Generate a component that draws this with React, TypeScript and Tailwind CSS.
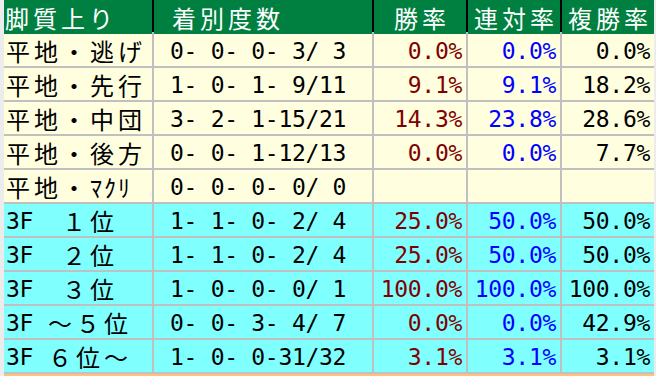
import React from "react";

const JP = "font-['Noto_Sans_CJK_JP','Noto_Sans_CJK_SC',sans-serif]";
const MONO = "font-['DejaVu_Sans_Mono','Liberation_Mono',monospace]";
const NUM = `${MONO} text-[23px] tracking-[-0.3px]`;
const COLS = "grid grid-cols-[148px_218px_92px_92px_92px]";

type Row = {
  label: React.ReactNode;
  rec: string;
  win: string;
  ren: string;
  fuku: string;
  cyan?: boolean;
};

const jpText = (s: string) => (
  <span className={`${JP} text-[24px] tracking-[4px] text-black`}>{s}</span>
);

const heiLabel = (s: string) => jpText("平地・" + s);

const threeF = (gap: "full" | "half", rest: string) => (
  <span className="flex items-center">
    <span className={`${NUM} inline-block w-[28px] text-black`}>3F</span>
    {gap === "full" ? jpText("　" + rest) : (
      <>
        <span className="inline-block w-[14px]" />
        {jpText(rest)}
      </>
    )}
  </span>
);

const rows: Row[] = [
  { label: heiLabel("逃げ"), rec: "0- 0- 0- 3/ 3", win: "0.0%", ren: "0.0%", fuku: "0.0%" },
  { label: heiLabel("先行"), rec: "1- 0- 1- 9/11", win: "9.1%", ren: "9.1%", fuku: "18.2%" },
  { label: heiLabel("中団"), rec: "3- 2- 1-15/21", win: "14.3%", ren: "23.8%", fuku: "28.6%" },
  { label: heiLabel("後方"), rec: "0- 0- 1-12/13", win: "0.0%", ren: "0.0%", fuku: "7.7%" },
  {
    label: (
      <span className="flex items-center">
        {jpText("平地・")}
        <span className={`${JP} text-[24px] tracking-[2px] text-black`}>ﾏｸﾘ</span>
      </span>
    ),
    rec: "0- 0- 0- 0/ 0",
    win: "",
    ren: "",
    fuku: "",
  },
  { label: threeF("full", "１位"), rec: "1- 1- 0- 2/ 4", win: "25.0%", ren: "50.0%", fuku: "50.0%", cyan: true },
  { label: threeF("full", "２位"), rec: "1- 1- 0- 2/ 4", win: "25.0%", ren: "50.0%", fuku: "50.0%", cyan: true },
  { label: threeF("full", "３位"), rec: "1- 0- 0- 0/ 1", win: "100.0%", ren: "100.0%", fuku: "100.0%", cyan: true },
  { label: threeF("half", "～５位"), rec: "0- 0- 3- 4/ 7", win: "0.0%", ren: "0.0%", fuku: "42.9%", cyan: true },
  { label: threeF("half", "６位～"), rec: "1- 0- 0-31/32", win: "3.1%", ren: "3.1%", fuku: "3.1%", cyan: true },
];

export default function App() {
  return (
    <div className="w-[656px] h-[376px] overflow-hidden bg-[#ececec]">
      <div className="ml-[4px] w-[650px]">
        {/* header */}
        <div className={`${COLS} gap-x-[2px] bg-black h-[32px]`}>
          <div className={`bg-[#008040] flex items-center pl-[1px] ${JP} text-[24px] tracking-[4px] text-white`}>脚質上り</div>
          <div className={`bg-[#008040] flex items-center pl-[18px] ${JP} text-[24px] tracking-[4px] text-white`}>着別度数</div>
          <div className={`bg-[#008040] flex items-center justify-center pl-[4px] ${JP} text-[24px] tracking-[4px] text-white`}>勝率</div>
          <div className={`bg-[#008040] flex items-center justify-center pl-[4px] ${JP} text-[24px] tracking-[4px] text-white`}>連対率</div>
          <div className={`bg-[#008040] flex items-center justify-center pl-[4px] ${JP} text-[24px] tracking-[4px] text-white`}>複勝率</div>
        </div>
        {/* body */}
        <div className={`${COLS} gap-[2px] bg-[#c0c0c0] py-[2px]`}>
          {rows.map((r, i) => {
            const bg = r.cyan ? "bg-[#80ffff]" : "bg-[#ffffe0]";
            return (
              <React.Fragment key={i}>
                <div className={`${bg} h-[32px] flex items-center pl-[2px] pt-[2px]`}>{r.label}</div>
                <div className={`${bg} h-[32px] flex items-center pl-[16px] pt-[2px] ${NUM} text-black whitespace-pre`}>{r.rec}</div>
                <div className={`${bg} h-[32px] flex items-center justify-end pr-[4px] pt-[2px] ${NUM} text-[#800000]`}>{r.win}</div>
                <div className={`${bg} h-[32px] flex items-center justify-end pr-[4px] pt-[2px] ${NUM} text-[#0000ff]`}>{r.ren}</div>
                <div className={`${bg} h-[32px] flex items-center justify-end pr-[4px] pt-[2px] ${NUM} text-black`}>{r.fuku}</div>
              </React.Fragment>
            );
          })}
        </div>
        <div className="h-[2px] bg-[#ffc080]" />
      </div>
    </div>
  );
}
